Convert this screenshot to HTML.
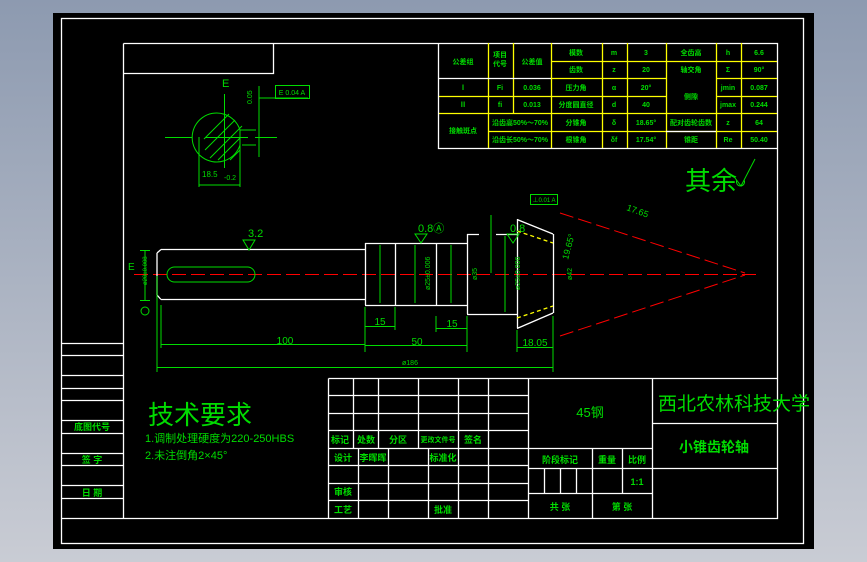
<!DOCTYPE html>
<html><head><meta charset="utf-8"><style>
html,body{margin:0;padding:0;width:867px;height:562px;overflow:hidden;background:linear-gradient(#8d9ab0,#c9ccd4);}
svg{display:block}
text{font-family:"Liberation Sans","Noto Sans CJK SC",sans-serif;fill:#00dc00}
.w{stroke:#fff;stroke-width:1.3;fill:none}
.y{stroke:#ffff00;stroke-width:1.3;fill:none}
.g{stroke:#00dc00;stroke-width:1;fill:none}
.r{stroke:#ff0000;stroke-width:1;fill:none;stroke-dasharray:14 5}
.s{font-size:9px;text-anchor:middle}
</style></head><body>
<svg width="867" height="562" viewBox="0 0 867 562">
<rect x="53" y="13" width="761" height="536" fill="#000"/>
<rect x="61.5" y="18.5" width="742" height="525" class="w"/>
<path class="w" d="M123.5 43.5H777.5V518.5H61.5M123.5 43.5V518.5M123.5 73.5H273.5V43.5"/>
<path class="w" d="M61 343.5H123M61 355.5H123M61 375.5H123M61 388.5H123M61 400.5H123M61 420.5H123M61 433.5H123M61 453.5H123M61 465.5H123M61 485.5H123M61 498.5H123"/>
<text x="92" y="430" class="s" font-size="10" font-weight="bold">底图代号</text>
<text x="92" y="463" class="s" font-size="10" font-weight="bold">签 字</text>
<text x="92" y="496" class="s" font-size="10" font-weight="bold">日 期</text>
<path class="y" d="M551 61.5H777M438 96.5H551M438 113.5H777M488 131.5H777M551 78.5H666M551 96.5H666M716 78.5H777M716 96.5H777M488.5 43V148M513.5 43V113M551.5 43V148M602.5 43V148M627.5 43V148M666.5 43V148M716.5 43V148M741.5 43V148"/>
<path class="w" d="M438.5 43.5V148.5H777.5M438.5 78.5H551M666 131.5H716"/>
<g font-size="7" text-anchor="middle" font-weight="bold">
<text x="463" y="64">公差组</text><text x="500" y="57">项目</text><text x="500" y="66">代号</text><text x="532" y="64">公差值</text>
<text x="576" y="55">模数</text><text x="614" y="55">m</text><text x="646" y="55">3</text><text x="691" y="55">全齿高</text><text x="728" y="55">h</text><text x="759" y="55">6.6</text>
<text x="576" y="72">齿数</text><text x="614" y="72">z</text><text x="646" y="72">20</text><text x="691" y="72">轴交角</text><text x="728" y="72">Σ</text><text x="759" y="72">90°</text>
<text x="463" y="90">Ⅰ</text><text x="500" y="90">Fi</text><text x="532" y="90">0.036</text><text x="576" y="90">压力角</text><text x="614" y="90">α</text><text x="646" y="90">20°</text>
<text x="691" y="99">侧隙</text><text x="728" y="90">jmin</text><text x="759" y="90">0.087</text>
<text x="463" y="107">Ⅱ</text><text x="500" y="107">fi</text><text x="532" y="107">0.013</text><text x="576" y="107">分度圆直径</text><text x="614" y="107">d</text><text x="646" y="107">40</text><text x="728" y="107">jmax</text><text x="759" y="107">0.244</text>
<text x="463" y="133">接触斑点</text><text x="520" y="125">沿齿高50%～70%</text><text x="520" y="142">沿齿长50%～70%</text>
<text x="576" y="125">分锥角</text><text x="614" y="125">δ</text><text x="646" y="125">18.65°</text><text x="691" y="125">配对齿轮齿数</text><text x="728" y="125">z</text><text x="759" y="125">64</text>
<text x="576" y="142">根锥角</text><text x="614" y="142">δf</text><text x="646" y="142">17.54°</text><text x="691" y="142">锥距</text><text x="728" y="142">Re</text><text x="759" y="142">50.40</text>
</g>
<path class="w" d="M328.5 378.5H777.5M328.5 378.5V518.5M328 395.5H528M328 413.5H528M328 430.5H528M328 448.5H652M328 465.5H528M328 483.5H528M328 500.5H528M353.5 378V448M378.5 378V448M418.5 378V448M458.5 378V518M488.5 378V518M528.5 378V518M358.5 448V518M388.5 448V518M428.5 448V518M652.5 378V518M652 423.5H777M652 468.5H777M528 468.5H652M528 493.5H652M592.5 448V518M622.5 448V493M544.5 468V493M560.5 468V493M576.5 468V493"/>
<g font-size="9" text-anchor="middle" font-weight="bold">
<text x="340" y="443">标记</text><text x="366" y="443">处数</text><text x="398" y="443">分区</text><text x="438" y="442" font-size="7">更改文件号</text><text x="473" y="443">签名</text>
<text x="343" y="461">设计</text><text x="373" y="461">李晖晖</text><text x="443" y="461">标准化</text>
<text x="343" y="495">审核</text><text x="343" y="513">工艺</text><text x="443" y="513">批准</text>
<text x="560" y="463">阶段标记</text><text x="607" y="463">重量</text><text x="637" y="463">比例</text>
<text x="637" y="485">1:1</text><text x="560" y="510">共 张</text><text x="622" y="510">第 张</text>
</g>
<text x="590" y="417" font-size="13" text-anchor="middle">45钢</text>
<text x="734" y="410" font-size="19" text-anchor="middle">西北农林科技大学</text>
<text x="714" y="452" font-size="14" text-anchor="middle" font-weight="bold">小锥齿轮轴</text>
<text x="148" y="424" font-size="26">技术要求</text>
<text x="145" y="442" font-size="11">1.调制处理硬度为220-250HBS</text>
<text x="145" y="459" font-size="11">2.未注倒角2×45°</text>
<text x="685" y="190" font-size="26">其余</text>
<path class="g" d="M735 178l6 8 14-27M737 180a4 4 0 1 0 7 0"/>
<text x="222" y="87" font-size="11">E</text>
<path class="g" d="M165 137.5H192M205 137.5H248M255 137.5H277M224.5 94V168"/>
<path class="g" d="M240 130A24.5 24.5 0 1 0 240 145V130Z"/>
<path class="g" d="M205 150l30-30M210 158l32-32M204 139l25-25M218 160l22-22M230 160l10-10" />
<path class="g" d="M199 137V187M240 130H256M242 145H256M259 86V157M259 98H308M199 185H240M240 145V187"/>
<rect x="275.5" y="85.5" width="34" height="13" class="g"/><text x="292" y="95" font-size="7" text-anchor="middle">E 0.04 A</text>
<text x="202" y="177" font-size="8">18.5</text><text x="224" y="180" font-size="7">-0.2</text>
<text x="252" y="104" font-size="7" transform="rotate(-90 252 104)">0.05</text>
<path class="r" d="M134 274.5H758"/>
<path class="w" d="M161 249.5H365M161 299.5H365M157 253V295M161 249.5L157 253M161 299.5L157 295M365.5 243V305M365 243.5H467M365 305.5H467M395.5 243V305M436.5 243V305M467.5 234V314M467 234.5H479M496 234.5H517M467 314.5H517M517.5 219V328M517 219.5L553 234M553.5 234V313M517 328.5L553 313"/>
<path class="y" d="M517 231l36 12M517 318l36-12" stroke-dasharray="4 3"/>
<path class="r" d="M560 213L745 273M560 336L745 275" stroke-dasharray="9 7"/>
<rect x="167" y="267" width="88" height="15" rx="7.5" class="g"/>
<path class="g" d="M157 276V372M161 305V348M365 307V352M467 316V352M553 316V372M517 330V352M395 307V330M436 316V332M161 344.5H365M365 345.5H467M157 367.5H553M365 326.5H395M436 328.5H467M517 347.5H553M380 245V303M415 245V303M451 245V303M505 236V312M491 215V273M145 250V300M140 250.5H150M140 300.5H150"/>
<text x="285" y="344" font-size="10" text-anchor="middle">100</text>
<text x="417" y="345" font-size="10" text-anchor="middle">50</text>
<text x="410" y="365" font-size="7" text-anchor="middle">ø186</text>
<text x="380" y="325" font-size="10" text-anchor="middle">15</text>
<text x="452" y="327" font-size="10" text-anchor="middle">15</text>
<text x="535" y="346" font-size="10" text-anchor="middle">18.05</text>
<text x="248" y="237" font-size="11">3.2</text><path class="g" d="M243 240l6 10 6-10z"/>
<text x="418" y="232" font-size="11">0.8Ⓐ</text><path class="g" d="M415 234l6 9 6-9z"/>
<text x="510" y="232" font-size="11">0.8</text><path class="g" d="M507 234l6 9 6-9z"/>
<text x="128" y="270" font-size="10">E</text>
<circle cx="145" cy="311" r="4" class="g"/>
<text x="430" y="290" font-size="7" transform="rotate(-90 430 290)">ø25±0.006</text>
<text x="477" y="280" font-size="7" transform="rotate(-90 477 280)">ø35</text>
<text x="520" y="290" font-size="7" transform="rotate(-90 520 290)">ø25±0.006</text>
<text x="572" y="280" font-size="7" transform="rotate(-90 572 280)">ø42</text>
<text x="568" y="260" font-size="9" transform="rotate(-75 568 260)">19.65°</text>
<text x="626" y="210" font-size="9" transform="rotate(20 626 210)">17.65</text>
<rect x="530.5" y="194.5" width="27" height="10" class="g"/><text x="544" y="202" font-size="6" text-anchor="middle">⊥0.01 A</text>
<text x="147" y="285" font-size="6" transform="rotate(-90 147 285)">ø20±0.008</text>
</svg>
</body></html>
